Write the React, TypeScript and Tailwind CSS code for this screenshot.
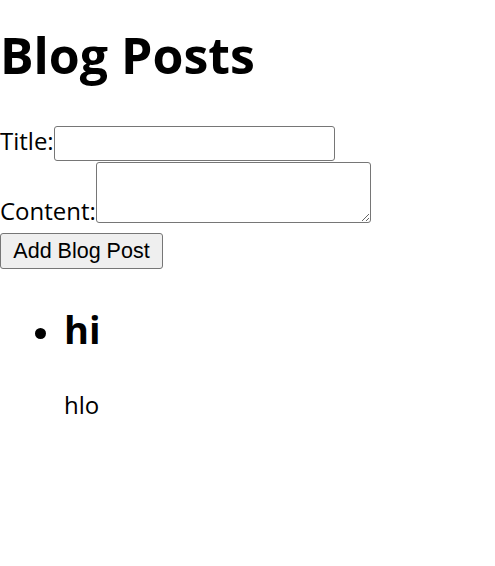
import { useState } from 'react';

type Post = { title: string; content: string };

const App: React.FC = () => {
  const [posts, setPosts] = useState<Post[]>([{ title: 'hi', content: 'hlo' }]);
  const [title, setTitle] = useState('');
  const [content, setContent] = useState('');

  const addPost = (e: React.FormEvent) => {
    e.preventDefault();
    if (!title.trim()) return;
    setPosts([...posts, { title, content }]);
    setTitle('');
    setContent('');
  };

  return (
    <div className={"min-h-[566px] bg-white pt-[30px] text-black font-['Open_Sans',sans-serif]"}>
      <h1 className={'text-[50px] leading-[50px] font-bold'}>Blog Posts</h1>
      <form onSubmit={addPost} className={'mt-[46px]'}>
        <div className={'flex items-start h-[35px]'}>
          <label className={'pt-[3px] text-[24px] leading-[24px]'}>Title:</label>
          <input
            type="text"
            value={title}
            onChange={(e) => setTitle(e.target.value)}
            className={'w-[281px] h-[35px] border border-[#767676] rounded-[3px] bg-white px-1 text-[20px]'}
          />
        </div>
        <div className={'flex items-end mt-px'}>
          <label className={'text-[24px] leading-[24px]'}>Content:</label>
          <textarea
            value={content}
            onChange={(e) => setContent(e.target.value)}
            className={'w-[275px] h-[61px] border border-[#767676] rounded-[3px] bg-white text-[20px]'}
          />
        </div>
        <button
          type="submit"
          className={"mt-[10px] w-[163px] h-[36px] border border-[#767676] rounded-[3px] bg-[#efefef] text-center text-[21.5px] leading-[22px] font-['Liberation_Sans',Arial,sans-serif]"}
        >
          Add Blog Post
        </button>
      </form>
      <ul className={'mt-[39px] pl-[64px] list-disc text-[24px] marker:text-[32px]'}>
        {posts.map((post, i) => (
          <li key={i}>
            <h2 className={'text-[38px] leading-[38px] font-bold'}>{post.title}</h2>
            <p className={'mt-[45px] text-[24px] leading-[24px]'}>{post.content}</p>
          </li>
        ))}
      </ul>
    </div>
  );
};

export default App;
